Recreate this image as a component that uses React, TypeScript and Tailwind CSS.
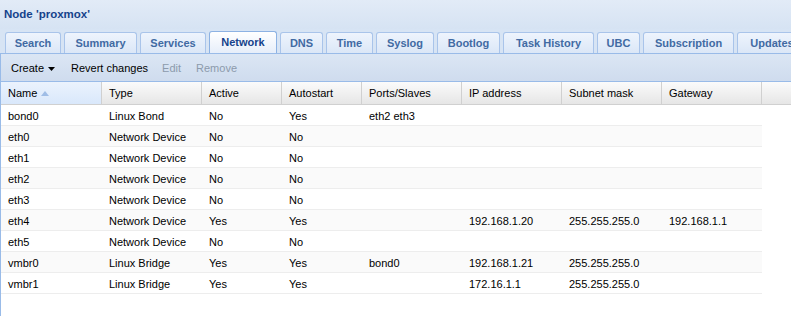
import React from "react";

const tabs: { label: string; w: string; active?: boolean }[] = [
  { label: "Search", w: "w-[56px]" },
  { label: "Summary", w: "w-[73px]" },
  { label: "Services", w: "w-[66px]" },
  { label: "Network", w: "w-[68px]", active: true },
  { label: "DNS", w: "w-[43px]" },
  { label: "Time", w: "w-[47px]" },
  { label: "Syslog", w: "w-[58px]" },
  { label: "Bootlog", w: "w-[63px]" },
  { label: "Task History", w: "w-[91px]" },
  { label: "UBC", w: "w-[43px]" },
  { label: "Subscription", w: "w-[91px]" },
  { label: "Updates", w: "w-[70px]" },
];

const columns = [
  { label: "Name", w: "w-[101px]" },
  { label: "Type", w: "w-[100px]" },
  { label: "Active", w: "w-[80px]" },
  { label: "Autostart", w: "w-[80px]" },
  { label: "Ports/Slaves", w: "w-[100px]" },
  { label: "IP address", w: "w-[100px]" },
  { label: "Subnet mask", w: "w-[100px]" },
  { label: "Gateway", w: "w-[100px]" },
];

const rows: string[][] = [
  ["bond0", "Linux Bond", "No", "Yes", "eth2 eth3", "", "", ""],
  ["eth0", "Network Device", "No", "No", "", "", "", ""],
  ["eth1", "Network Device", "No", "No", "", "", "", ""],
  ["eth2", "Network Device", "No", "No", "", "", "", ""],
  ["eth3", "Network Device", "No", "No", "", "", "", ""],
  ["eth4", "Network Device", "Yes", "Yes", "", "192.168.1.20", "255.255.255.0", "192.168.1.1"],
  ["eth5", "Network Device", "No", "No", "", "", "", ""],
  ["vmbr0", "Linux Bridge", "Yes", "Yes", "bond0", "192.168.1.21", "255.255.255.0", ""],
  ["vmbr1", "Linux Bridge", "Yes", "Yes", "", "172.16.1.1", "255.255.255.0", ""],
];

export default function App() {
  return (
    <div className="w-[791px] h-[316px] overflow-hidden bg-white font-['Liberation_Sans',Arial,sans-serif] text-[11px] text-black">
      {/* Panel title */}
      <div className="h-[29px] flex items-center px-[4px] pt-[1px] bg-gradient-to-b from-[#e2ebf7] to-[#d6e3f3] text-[11.5px] font-bold text-[#15428b]">
        Node 'proxmox'
      </div>

      {/* Tab strip */}
      <div className="h-[25px] flex items-end gap-[3px] pl-[5px] bg-[#d7e4f4] border-b border-[#99bbe8]">
        {tabs.map((t) => (
          <div
            key={t.label}
            className={`${t.w} shrink-0 h-[21px] flex items-center justify-center rounded-t-[3px] border border-b-0 font-bold whitespace-nowrap ${
              t.active
                ? "border-[#8db2e3] bg-gradient-to-b from-[#ffffff] to-[#e6eefa] text-[#15428b] h-[22px]"
                : "border-[#a9c4ea] bg-gradient-to-b from-[#eef4fd] to-[#dbe7f7] text-[#416aa3]"
            }`}
          >
            {t.label}
          </div>
        ))}
      </div>

      <div className="border-l border-[#99bbe8] h-full">
        {/* Toolbar */}
        <div className="h-[28px] flex items-center pt-[1px] bg-gradient-to-b from-[#dbe6f4] to-[#cfdcee] border-b border-[#99bbe8] pl-[10px]">
          <span className="flex items-center">
            Create
            <svg width="7" height="4" viewBox="0 0 7 4" className="ml-[4px] mt-[1px]">
              <path d="M0 0 L7 0 L3.5 4 Z" fill="#000" />
            </svg>
          </span>
          <span className="ml-[16px]">Revert changes</span>
          <span className="ml-[14px] text-[#8c9aac]">Edit</span>
          <span className="ml-[15px] text-[#8c9aac]">Remove</span>
        </div>

        {/* Grid header */}
        <div className="h-[23px] flex bg-gradient-to-b from-[#fbfbfb] to-[#e6e6e6] border-b border-[#d0d0d0]">
          {columns.map((c, i) => (
            <div
              key={c.label}
              className={`${c.w} shrink-0 flex items-center pl-[7px] pt-[1px] border-r border-[#d0d0d0] ${
                i === 0 ? "bg-gradient-to-b from-[#ebf3fd] to-[#d9e8fb]" : ""
              }`}
            >
              {c.label}
              {i === 0 && (
                <svg width="8" height="5" viewBox="0 0 8 5" className="ml-[4px]">
                  <path d="M0 5 L4 0 L8 5 Z" fill="#9fbde6" />
                </svg>
              )}
            </div>
          ))}
          <div className="flex-1" />
        </div>

        {/* Grid rows */}
        <div className="w-[761px]">
          {rows.map((r, ri) => (
            <div
              key={r[0]}
              className={`h-[21px] flex border-b border-[#ededed] ${ri % 2 === 1 ? "bg-[#fafafa]" : "bg-white"}`}
            >
              {r.map((cell, ci) => (
                <div key={ci} className={`${columns[ci].w} shrink-0 flex items-center pl-[7px] pt-[2px] whitespace-nowrap`}>
                  {cell}
                </div>
              ))}
            </div>
          ))}
        </div>
      </div>
    </div>
  );
}
